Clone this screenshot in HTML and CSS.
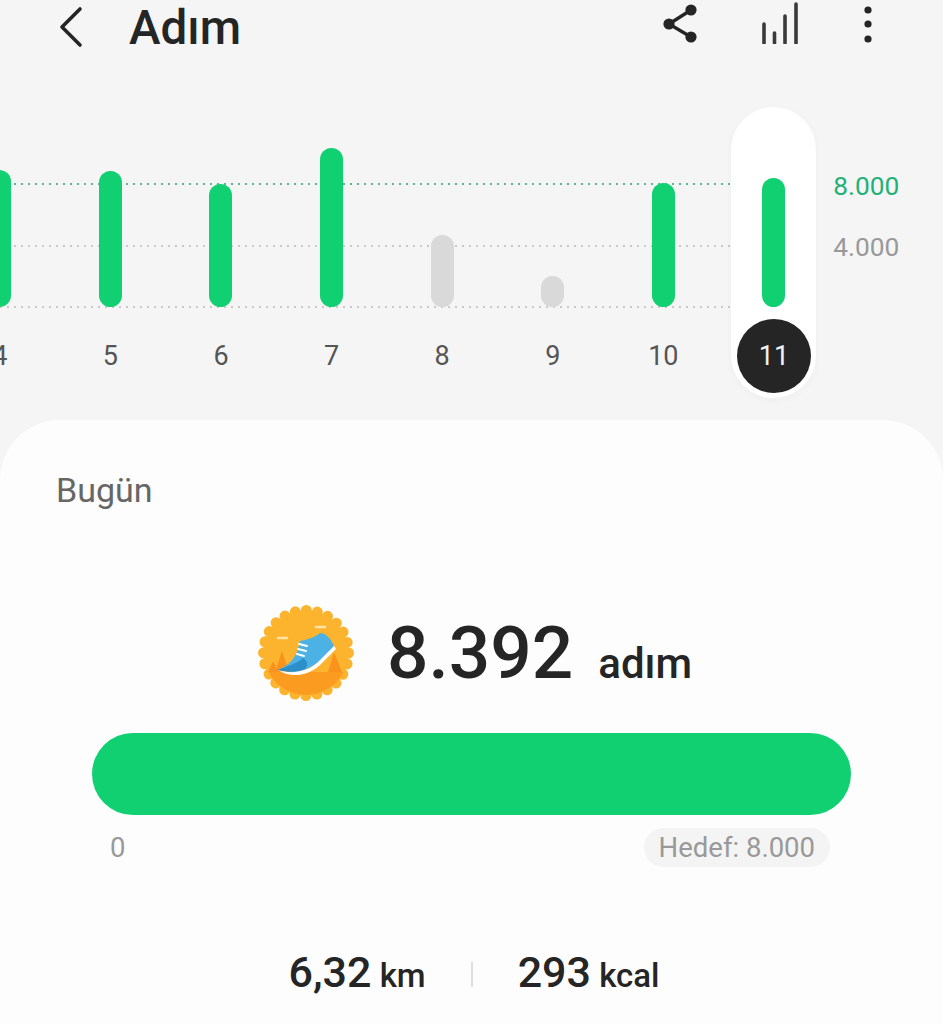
FILE: index.html
```html
<!DOCTYPE html>
<html lang="tr">
<head>
	<meta charset="UTF-8">
	<title>Adım</title>
	<link rel="stylesheet" href="styles.css">
</head>
<body>
<header class="topbar">
	<svg class="ic-back" viewBox="0 0 30 44" width="30" height="44"><path d="M24 4 L6 22 L24 40" fill="none" stroke="#252525" stroke-width="3.6" stroke-linecap="round" stroke-linejoin="round"/></svg>
	<h1 class="title">Adım</h1>
	<svg class="ic-share" viewBox="0 0 40 40" width="40" height="40"><path d="M30 6 L8 20 L30 33" fill="none" stroke="#252525" stroke-width="3.4"/><circle cx="30" cy="6" r="5.6" fill="#252525"/><circle cx="8" cy="20" r="5.6" fill="#252525"/><circle cx="30" cy="33" r="5.6" fill="#252525"/></svg>
	<svg class="ic-trend" viewBox="0 0 44 44" width="44" height="44"><path d="M5 24 V43 M15.500 33 V43 M26 16 V43 M37 4 V43" fill="none" stroke="#3a3a3a" stroke-width="3.6" stroke-linecap="round"/></svg>
	<svg class="ic-more" viewBox="0 0 16 44" width="16" height="44"><circle cx="8" cy="6" r="3.6" fill="#252525"/><circle cx="8" cy="20" r="3.6" fill="#252525"/><circle cx="8" cy="35" r="3.6" fill="#252525"/></svg>
</header>

<section class="chart">
	<div class="grid">
		<div class="line line-goal"></div>
		<div class="line line-mid"></div>
		<div class="line line-base"></div>
	</div>
	<div class="col"><div class="plot"><div class="bar h137"></div></div><div class="day">4</div></div>
	<div class="col"><div class="plot"><div class="bar h136"></div></div><div class="day">5</div></div>
	<div class="col"><div class="plot"><div class="bar h123"></div></div><div class="day">6</div></div>
	<div class="col"><div class="plot"><div class="bar h159"></div></div><div class="day">7</div></div>
	<div class="col"><div class="plot"><div class="bar low h72"></div></div><div class="day">8</div></div>
	<div class="col"><div class="plot"><div class="bar low h31"></div></div><div class="day">9</div></div>
	<div class="col"><div class="plot"><div class="bar h124"></div></div><div class="day">10</div></div>
	<div class="col col-active"><div class="plot"><div class="bar h129"></div></div><div class="day">11</div></div>
	<div class="axis">
		<span class="axis-goal">8.000</span>
		<span class="axis-mid">4.000</span>
	</div>
</section>

<main class="card">
	<div class="card-label">Bugün</div>
	<div class="hero">
		<svg class="badge" viewBox="0 0 96 96" width="96" height="96">
			<circle cx="48" cy="48" r="42.500" fill="#fcb42e" stroke="#fcb42e" stroke-width="11" stroke-linecap="round" stroke-dasharray="0 11.126"/>
			<path d="M10.500 67 H85.500 A42 42 0 0 1 10.500 67 Z" fill="#fb9c20"/>
			<path d="M24 46 L17 67 H31 Z M15 56 L10 67 H20 Z M76 47 L70 67 H84 Z" fill="#f9931d"/>
			<path d="M20 33 H29 M58 22 H67" stroke="#fde3a8" stroke-width="2.600" stroke-linecap="round"/>
			<path d="M20 65 C30 60 38 56 42 36 C48 35 56 33 62 28 C68 28 73 34 76 41 C68 52 56 64 38 67 Z" fill="#4cb1e4"/>
			<path d="M20 65 C30 61 40 58 45 53 C50 56 50 61 47 64 C40 67 30 68 20 65 Z" fill="#2b8fc9"/>
			<path d="M20 65 C32 69 48 68 60 57 L76 41 L78 44 L62 60 C48 73 30 72 20 65 Z" fill="#fff"/>
			<path d="M41 39 L49 41 M40 44 L48 46 M39 49 L46 51" stroke="#fff" stroke-width="2" stroke-linecap="round"/>
		</svg>
		<span class="steps">8.392</span>
		<span class="steps-unit">adım</span>
	</div>
	<div class="progress"></div>
	<div class="progress-scale">
		<span class="scale-zero">0</span>
		<span class="goal-chip">Hedef: 8.000</span>
	</div>
	<div class="stats">
		<span class="stat"><b>6,32</b> km</span>
		<i class="stat-sep"></i>
		<span class="stat"><b>293</b> kcal</span>
	</div>
</main>
</body>
</html>
```

FILE: styles.css
```css
html, body {
	margin: 0;
	height: 1024px;
	overflow: hidden;
}
body {
	background: #f5f5f5;
	color: #252525;
	font-family: Roboto, "Noto Sans", sans-serif;
}

/* top bar */
.topbar {
	display: flex;
	align-items: flex-start;
	height: 56px;
	padding-left: 56px;
}
.ic-back {
	margin-top: 5px;
}
.title {
	margin: 0 0 0 43px;
	font-size: 47.500px;
	font-weight: 500;
	line-height: 56px;
	flex: 1;
}
.ic-share {
	margin-top: 4px;
}
.ic-trend {
	margin-left: 58px;
}
.ic-more {
	margin-left: 57px;
	margin-right: 67px;
	margin-top: 4px;
}

/* chart */
.chart {
	position: relative;
	display: flex;
	align-items: flex-start;
	height: 364px;
	padding-top: 51px;
	margin-left: -55.500px;
	box-sizing: border-box;
	width: 1000px;
}
.grid {
	position: absolute;
	left: 55.500px;
	top: 127px;
	width: 731px;
	height: 125px;
	display: flex;
	flex-direction: column;
	justify-content: space-between;
}
.line {
	height: 2px;
	background-size: 7px 2px;
}
.line-goal {
	background-image: linear-gradient(to right, #5fb893 2px, transparent 2px);
}
.line-mid, .line-base {
	background-image: linear-gradient(to right, #c9c9c9 2px, transparent 2px);
}
.col {
	position: relative;
	flex: 0 0 110.6px;
	display: flex;
	flex-direction: column;
	align-items: center;
	height: 291px;
}
.plot {
	height: 200px;
	display: flex;
	align-items: flex-end;
}
.bar {
	width: 23px;
	border-radius: 12px;
	background: #11d071;
}
.bar.low {
	background: #d9d9d9;
}
.h137 { height: 137px; }
.h136 { height: 136px; }
.h123 { height: 123px; }
.h159 { height: 159px; }
.h72 { height: 72px; }
.h31 { height: 31px; }
.h124 { height: 124px; }
.h129 { height: 129px; }
.day {
	margin-top: 12px;
	width: 74px;
	height: 74px;
	line-height: 74px;
	border-radius: 50%;
	text-align: center;
	font-size: 27px;
	color: #555;
}
.col-active {
	flex-basis: 85px;
	margin: 0 12.8px;
	background: #fff;
	border-radius: 43px;
	box-shadow: 0 2px 8px rgba(0, 0, 0, .03);
}
.col-active .day {
	background: #252525;
	color: #f2f2f2;
}
.axis {
	display: flex;
	flex-direction: column;
	margin-left: 4px;
	padding-top: 49px;
	font-size: 26.300px;
	line-height: 61px;
}
.axis-goal {
	color: #1fb277;
}
.axis-mid {
	color: #999;
}

/* today card */
.card {
	height: 604px;
	box-sizing: border-box;
	padding-top: 50px;
	background: #fdfdfd;
	border-radius: 60px 60px 0 0;
}
.card-label {
	margin-left: 56px;
	font-size: 34px;
	line-height: 40px;
	color: #666;
}
.hero {
	display: flex;
	align-items: center;
	height: 98px;
	margin-top: 94px;
	padding-left: 258px;
}
.badge {
	flex: none;
}
.steps {
	margin-left: 33px;
	font-size: 73px;
	font-weight: 500;
	line-height: 98px;
}
.steps-unit {
	margin-left: 25px;
	margin-top: 20px;
	font-size: 42px;
	font-weight: 500;
}
.progress {
	height: 82px;
	margin: 31px 92px 0;
	border-radius: 41px;
	background: #11d071;
}
.progress-scale {
	display: flex;
	justify-content: space-between;
	align-items: center;
	margin: 13px 113px 0 110px;
	font-size: 27.500px;
	color: #999;
}
.goal-chip {
	padding: 0 15px;
	height: 39px;
	line-height: 39px;
	border-radius: 20px;
	background: #f4f4f4;
}
.stats {
	display: flex;
	justify-content: center;
	align-items: center;
	gap: 45px;
	margin-top: 80px;
	padding-left: 5px;
	font-size: 33px;
	font-weight: 500;
	line-height: 50px;
}
.stat b {
	font-size: 43px;
	font-weight: 500;
}
.stat-sep {
	width: 2px;
	height: 25px;
	background: #ddd;
}
```
